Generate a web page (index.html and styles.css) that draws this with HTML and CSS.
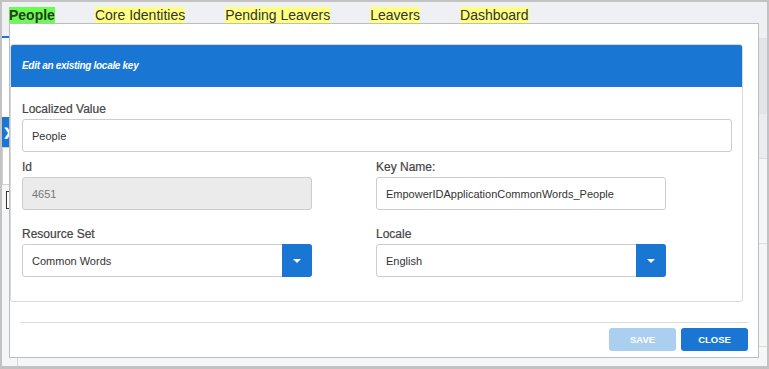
FILE: index.html
```html
<!DOCTYPE html>
<html>
<head>
<meta charset="utf-8">
<link rel="stylesheet" href="styles.css">
</head>
<body>
<div class="frame">
  <nav class="tabs">
    <span class="tab active">People</span>
    <span class="tab">Core Identities</span>
    <span class="tab">Pending Leavers</span>
    <span class="tab">Leavers</span>
    <span class="tab">Dashboard</span>
  </nav>
  <div class="tab-underline"></div>
  <div class="bg-body">
    <div class="side">
      <div class="side-top"></div>
      <div class="side-toggle">&#x276F;</div>
      <div class="side-box"></div>
      <div class="side-check"></div>
      <div class="side-bottom"></div>
    </div>
    <div class="rside">
      <div class="r1"></div>
      <div class="r2"></div>
      <div class="r3"></div>
      <div class="r4"></div>
      <div class="r5"></div>
    </div>
  </div>

  <div class="modal">
    <div class="card">
      <div class="card-head">Edit an existing locale key</div>
      <div class="card-body">
        <div class="field full row1">
          <label class="lbl">Localized Value</label>
          <div class="input">People</div>
        </div>
        <div class="grid row2">
          <div class="field">
            <label class="lbl">Id</label>
            <div class="input disabled">4651</div>
          </div>
          <div class="field">
            <label class="lbl">Key Name:</label>
            <div class="input">EmpowerIDApplicationCommonWords_People</div>
          </div>
        </div>
        <div class="grid">
          <div class="field">
            <label class="lbl">Resource Set</label>
            <div class="select"><span class="select-val">Common Words</span><span class="caret-btn"><span class="caret"></span></span></div>
          </div>
          <div class="field">
            <label class="lbl">Locale</label>
            <div class="select"><span class="select-val">English</span><span class="caret-btn"><span class="caret"></span></span></div>
          </div>
        </div>
      </div>
    </div>
    <div class="footer">
      <button class="btn btn-disabled">SAVE</button>
      <button class="btn">CLOSE</button>
    </div>
  </div>
</div>
</body>
</html>
```

FILE: styles.css
```css
html, body {
  margin: 0;
  padding: 0;
  background: #fff;
}
.frame {
  position: relative;
  width: 769px;
  height: 369px;
  box-sizing: border-box;
  border: 2px solid #c2c2c2;
  border-bottom-width: 3px;
  background: #eff0f4;
  overflow: hidden;
  font-family: "Liberation Sans", Arial, sans-serif;
  display: flex;
  flex-direction: column;
}
.tabs {
  display: flex;
  gap: 40px;
  padding: 5px 0 0 7px;
}
.tab {
  font-size: 14px;
  line-height: 16px;
  color: #333;
  background: #ffff80;
}
.tab.active {
  background: #66ff4d;
  font-weight: bold;
  color: #2a3a22;
}
.tab-underline {
  margin-top: 13px;
  width: 54px;
  height: 2px;
  background: #1976d2;
}
.bg-body {
  flex: 1;
  display: flex;
  justify-content: space-between;
  background: #f5f6f8;
}
.side {
  width: 15px;
  display: flex;
  flex-direction: column;
  border-right: 1px solid #d8d8dc;
}
.side-top {
  height: 79px;
  background: #fff;
}
.side-toggle {
  height: 30px;
  background: #1976d2;
  color: #fff;
  font-size: 11px;
  line-height: 30px;
  padding-left: 1px;
  font-weight: bold;
}
.side-box {
  height: 36px;
  background: #fff;
  border: 1px solid #d0d0d0;
}
.side-check {
  margin: 6px 0 0 4px;
  width: 10px;
  height: 16px;
  border: 1px solid #333;
  background: #fff;
}
.side-bottom {
  flex: 1;
}
.rside {
  width: 12px;
  display: flex;
  flex-direction: column;
}
.r1 {
  height: 76px;
  background: #e3e4e8;
}
.r2 {
  height: 44px;
  background: #ebecef;
  border-bottom: 1px solid #dcdcdf;
}
.r3 {
  height: 84px;
  border-bottom: 1px solid #dcdcdf;
}
.r4 {
  height: 102px;
  border-bottom: 1px solid #dcdcdf;
}
.r5 {
  flex: 1;
}

/* modal */
.modal {
  position: absolute;
  left: 7px;
  top: 21px;
  width: 750px;
  height: 335px;
  box-sizing: border-box;
  border: 1px solid #bdbdbd;
  background: #fff;
  padding-top: 20px;
}
.card {
  width: 733px;
  box-sizing: border-box;
  border: 1px solid #d9d9d9;
  border-radius: 3px;
}
.card-head {
  height: 42px;
  line-height: 42px;
  background: #1976d2;
  border-radius: 2px 2px 0 0;
  color: #fff;
  font-size: 10px;
  font-style: italic;
  font-weight: bold;
  letter-spacing: -0.3px;
  padding-left: 11px;
}
.card-body {
  padding: 15px 10px 24px 11px;
}
.field {
  display: flex;
  flex-direction: column;
}
.row1 {
  margin-bottom: 8px;
}
.row2 {
  margin-bottom: 17px;
}
.grid {
  display: grid;
  grid-template-columns: 354px 354px;
}
.grid .field {
  width: 290px;
}
.lbl {
  font-size: 12px;
  line-height: 14px;
  color: #444;
  -webkit-text-stroke: 0.2px #444;
  margin-bottom: 3px;
}
.input, .select {
  height: 33px;
  box-sizing: border-box;
  border: 1px solid #cccccc;
  border-radius: 3px;
  background: #fff;
  font-size: 11px;
  color: #333;
  display: flex;
  align-items: center;
  padding-left: 9px;
}
.input.disabled {
  background: #ebebeb;
  color: #777;
}
.select {
  padding-left: 0;
  justify-content: space-between;
  align-items: stretch;
}
.select-val {
  display: flex;
  align-items: center;
  padding-left: 9px;
}
.caret-btn {
  width: 30px;
  margin: -1px -1px -1px 0;
  background: #1976d2;
  border-radius: 0 3px 3px 0;
  display: flex;
  align-items: center;
  justify-content: center;
}
.caret {
  width: 0;
  height: 0;
  border-left: 4px solid transparent;
  border-right: 4px solid transparent;
  border-top: 4px solid #fff;
}
.footer {
  margin: 20px 9px 0 10px;
  border-top: 1px solid #dddddd;
  padding: 5px 1px 0 0;
  display: flex;
  justify-content: flex-end;
  gap: 5px;
}
.btn {
  width: 67px;
  height: 23px;
  border: none;
  border-radius: 3px;
  background: #1976d2;
  color: #fff;
  font-family: "Liberation Sans", Arial, sans-serif;
  font-size: 9.5px;
  font-weight: bold;
  padding: 0;
}
.btn-disabled {
  background: #abcfef;
}
```
